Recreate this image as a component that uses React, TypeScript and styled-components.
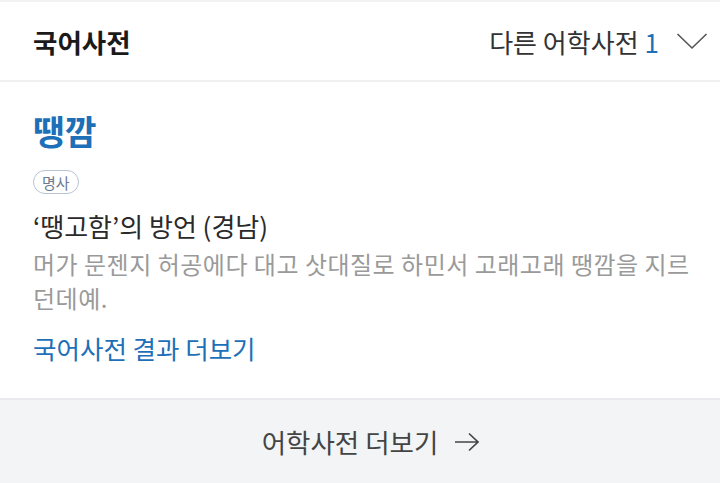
import React from "react";
import styled, { createGlobalStyle } from "styled-components";

const Global = createGlobalStyle`
  html, body { margin: 0; padding: 0; background: #ffffff; }
  body { font-family: "Noto Sans CJK KR", "Noto Sans", sans-serif; }
`;

const Page = styled.div`
  width: 720px;
  height: 483px;
  display: flex;
  flex-direction: column;
  background: #fff;
  overflow: hidden;
`;

const Header = styled.div`
  height: 78px;
  display: flex;
  align-items: center;
  justify-content: space-between;
  padding: 0 12px 0 33px;
  border-top: 2px solid #f1f2f3;
  border-bottom: 2px solid #eef0f1;
`;

const Title = styled.div`
  font-size: 26.5px;
  font-weight: 700;
  color: #1a1a1a;
`;

const Other = styled.div`
  display: flex;
  align-items: center;
  font-size: 26px;
  color: #333;
`;

const Count = styled.span`
  color: #1d6fb8;
  margin-left: 6px;
`;

const Chevron = styled.svg`
  margin-left: 17px;
  width: 32px;
  height: 18px;
`;

const Body = styled.div`
  flex: 1;
  padding: 28px 20px 0 33px;
  display: flex;
  flex-direction: column;
  align-items: flex-start;
`;

const Word = styled.div`
  font-size: 34.5px;
  line-height: 40px;
  font-weight: 700;
  color: #1d6fb8;
`;

const Badge = styled.span`
  margin-top: 20px;
  box-sizing: border-box;
  height: 24px;
  display: inline-flex;
  align-items: center;
  padding: 0 8px;
  border: 1.5px solid #b8c4d4;
  border-radius: 12px;
  font-size: 15px;
  color: #6a7a90;
`;

const Definition = styled.div`
  margin-top: 15px;
  font-size: 26px;
  line-height: 34px;
  color: #2a2a2a;
`;

const Example = styled.div`
  margin-top: 4px;
  font-size: 24px;
  line-height: 34px;
  color: #9a9a9a;
  letter-spacing: 0.5px;
  white-space: nowrap;
`;

const MoreLink = styled.div`
  margin-top: 16px;
  font-size: 25.5px;
  line-height: 34px;
  color: #1d6fb8;
`;

const Footer = styled.div`
  height: 83px;
  padding-left: 22px;
  border-top: 2px solid #e8eaee;
  background: #f2f4f5;
  display: flex;
  align-items: center;
  justify-content: center;
  font-size: 26.5px;
  color: #444;
`;

const Arrow = styled.svg`
  margin-left: 16px;
  width: 26px;
  height: 20px;
`;

export default function App() {
  return (
    <Page>
      <Global />
      <Header>
        <Title>국어사전</Title>
        <Other>
          다른 어학사전<Count>1</Count>
          <Chevron viewBox="0 0 32 18">
            <path d="M1.5 2 L16 16 L30.5 2" fill="none" stroke="#555" strokeWidth="1.6" />
          </Chevron>
        </Other>
      </Header>
      <Body>
        <Word>땡깜</Word>
        <Badge>명사</Badge>
        <Definition>‘땡고함’의 방언 (경남)</Definition>
        <Example>
          머가 문젠지 허공에다 대고 삿대질로 하민서 고래고래 땡깜을 지르
          <br />
          던데예.
        </Example>
        <MoreLink>국어사전 결과 더보기</MoreLink>
      </Body>
      <Footer>
        어학사전 더보기
        <Arrow viewBox="0 0 26 20">
          <path d="M1 10 H24 M15 1.5 L24 10 L15 18.5" fill="none" stroke="#444" strokeWidth="1.7" />
        </Arrow>
      </Footer>
    </Page>
  );
}
